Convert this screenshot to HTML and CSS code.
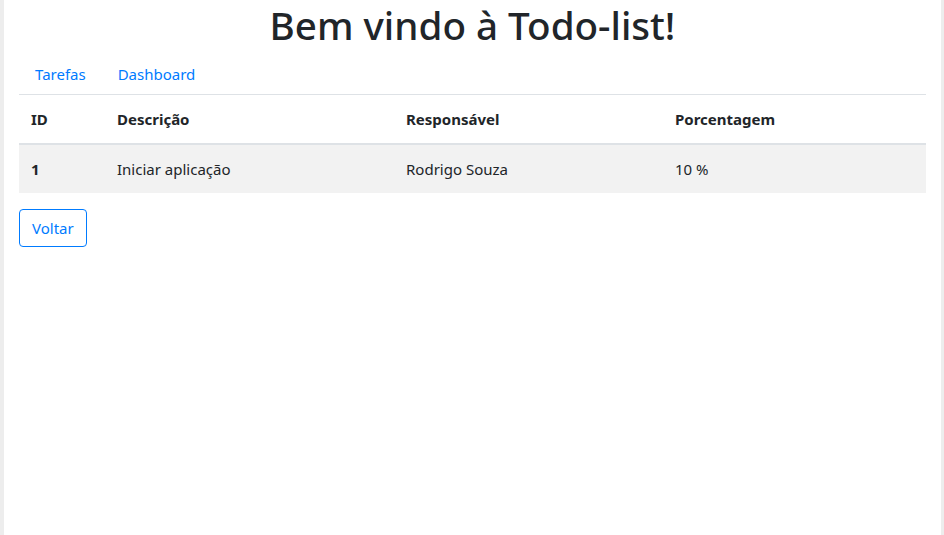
FILE: index.html
```html
<!DOCTYPE html>
<html lang="pt-BR">
<head>
<meta charset="utf-8">
<title>Todo-list</title>
<link rel="stylesheet" href="styles.css">
</head>
<body>
<div class="frame">
  <div class="container">
    <h1 class="title">Bem vindo à Todo-list!</h1>
    <nav class="nav">
      <a class="nav-link" href="#">Tarefas</a>
      <a class="nav-link" href="#">Dashboard</a>
    </nav>
    <table class="table">
      <colgroup>
        <col class="c-id"><col class="c-desc"><col class="c-resp"><col class="c-pct">
      </colgroup>
      <thead>
        <tr><th>ID</th><th>Descrição</th><th>Responsável</th><th>Porcentagem</th></tr>
      </thead>
      <tbody>
        <tr class="striped"><th>1</th><td>Iniciar aplicação</td><td>Rodrigo Souza</td><td>10 %</td></tr>
      </tbody>
    </table>
    <button class="btn-outline">Voltar</button>
  </div>
</div>
</body>
</html>
```

FILE: styles.css
```css
html, body {
  margin: 0;
  padding: 0;
  height: 100%;
}
body {
  background: #ededed;
  font-family: "Noto Sans", "Open Sans", sans-serif;
  font-size: 15px;
  line-height: 24px;
  color: #212529;
}
.frame {
  background: #fff;
  margin: 0 3px 0 4px;
  min-height: 100%;
}
.container {
  padding: 0 15px;
}
.title {
  margin: 0 0 6px;
  padding-top: 2px;
  font-size: 38.6px;
  font-weight: 500;
  line-height: 46px;
  text-align: center;
}
.nav {
  display: flex;
  height: 40px;
  align-items: center;
}
.nav-link {
  padding: 0 16px;
  color: #007bff;
  text-decoration: none;
}
.table {
  width: 100%;
  border-collapse: collapse;
  margin-bottom: 16px;
}
.c-id { width: 86px; }
.c-desc { width: 289px; }
.c-resp { width: 269px; }
.table th, .table td {
  padding: 12px;
  text-align: left;
  vertical-align: top;
  border-top: 1px solid #dee2e6;
}
.table th { font-weight: 700; }
.table thead th {
  border-bottom: 2px solid #dee2e6;
}
.table tbody th, .table tbody td { border-top: 0; }
.striped { background: #f2f2f2; }
.btn-outline {
  font: inherit;
  color: #007bff;
  background: transparent;
  border: 1px solid #007bff;
  border-radius: 4px;
  padding: 6px 12px;
  line-height: 24px;
}
```
